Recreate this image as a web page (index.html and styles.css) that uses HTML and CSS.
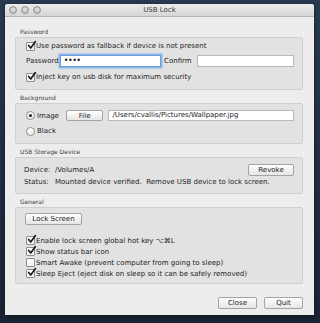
FILE: index.html
```html
<!DOCTYPE html>
<html>
<head>
<meta charset="utf-8">
<link rel="stylesheet" href="styles.css">
</head>
<body>
<div class="window">
  <div class="titlebar">
    <div class="lights"><span class="light"></span><span class="light"></span><span class="light"></span></div>
    <div class="title">USB Lock</div>
  </div>
  <div class="content">
    <div class="section-label">Password</div>
    <div class="box box-password">
      <div class="row chk-row"><span class="cb on"><svg viewBox="0 0 8 8"><path d="M1.5 4 L3.3 6.2 L7.5 0.5" /></svg></span><span>Use password as fallback if device is not present</span></div>
      <div class="row input-row">
        <span class="lbl">Password</span>
        <span class="field pw focus">••••</span>
        <span class="lbl confirm">Confirm</span>
        <span class="field cf"></span>
      </div>
      <div class="row chk-row r3"><span class="cb on"><svg viewBox="0 0 8 8"><path d="M1.5 4 L3.3 6.2 L7.5 0.5" /></svg></span><span>Inject key on usb disk for maximum security</span></div>
    </div>

    <div class="section-label">Background</div>
    <div class="box box-bg">
      <div class="row bg-row">
        <span class="radio on"></span><span class="rlabel">Image</span>
        <span class="btn file">File</span>
        <span class="field path">/Users/cvallis/Pictures/Wallpaper.jpg</span>
      </div>
      <div class="row chk-row r2"><span class="radio"></span><span>Black</span></div>
    </div>

    <div class="section-label">USB Storage Device</div>
    <div class="box box-usb">
      <div class="row usb-row">
        <span class="klbl">Device:</span><span class="val">/Volumes/A</span>
        <span class="btn revoke">Revoke</span>
      </div>
      <div class="row usb-row2">
        <span class="klbl">Status:</span><span class="val">Mounted device verified.&nbsp;&nbsp;Remove USB device to lock screen.</span>
      </div>
    </div>

    <div class="section-label">General</div>
    <div class="box box-gen">
      <div class="row"><span class="btn lock">Lock Screen</span></div>
      <div class="checks">
        <div class="row crow"><span class="cb on"><svg viewBox="0 0 8 8"><path d="M1.5 4 L3.3 6.2 L7.5 0.5" /></svg></span><span>Enable lock screen global hot key ⌥⌘L</span></div>
        <div class="row crow"><span class="cb on"><svg viewBox="0 0 8 8"><path d="M1.5 4 L3.3 6.2 L7.5 0.5" /></svg></span><span>Show status bar icon</span></div>
        <div class="row crow"><span class="cb"></span><span>Smart Awake (prevent computer from going to sleep)</span></div>
        <div class="row crow"><span class="cb on"><svg viewBox="0 0 8 8"><path d="M1.5 4 L3.3 6.2 L7.5 0.5" /></svg></span><span>Sleep Eject (eject disk on sleep so it can be safely removed)</span></div>
      </div>
    </div>

    <div class="buttons">
      <span class="btn bottom">Close</span>
      <span class="btn bottom">Quit</span>
    </div>
  </div>
</div>
</body>
</html>
```
FILE: styles.css
```css
html, body {
  margin: 0;
  padding: 0;
}
body {
  width: 320px;
  height: 323px;
  background: linear-gradient(180deg, #2a3a52 0%, #1f2c40 60%, #1a2434 100%);
  padding: 4px 0 0 5px;
  box-sizing: border-box;
  font-family: "DejaVu Sans", "Lucida Grande", sans-serif;
  font-size: 7px;
  color: #222;
}
.window {
  width: 309px;
  height: 311px;
  background: #ededed;
  border-radius: 3px 3px 0 0;
  box-shadow: 0 1px 4px rgba(0,0,0,0.5);
  overflow: hidden;
}
.titlebar {
  height: 12px;
  background: linear-gradient(180deg, #ececec 0%, #d6d6d6 100%);
  border-bottom: 1px solid #b5b5b5;
  position: relative;
  display: flex;
  align-items: center;
  justify-content: center;
}
.lights {
  position: absolute;
  left: 4px;
  top: 2px;
  display: flex;
  gap: 4px;
}
.light {
  width: 6px;
  height: 6px;
  border-radius: 50%;
  background: radial-gradient(circle at 50% 40%, #e4e4e4 0%, #c4c4c4 70%);
  border: 0.8px solid #8f8f8f;
}
.title {
  font-size: 7px;
  color: #3a3a3a;
  line-height: 12px;
}
.content {
  padding: 11px 11px 0 10px;
}
.section-label {
  font-size: 6px;
  line-height: 8px;
  height: 8px;
  color: #3c3c3c;
  padding-left: 5px;
  margin-bottom: 1px;
}
.box {
  background: #e2e2e2;
  border: 1px solid #cfcfcf;
  border-radius: 2px;
  margin-bottom: 4px;
  padding-left: 10px;
  padding-right: 8px;
}
.row {
  display: flex;
  align-items: center;
  white-space: nowrap;
}
.chk-row { height: 10px; }
.cb {
  width: 7px;
  height: 7px;
  background: linear-gradient(180deg, #fff 0%, #f0f0f0 100%);
  border: 1px solid #8e8e8e;
  border-radius: 1px;
  margin-right: 1px;
  position: relative;
  flex: none;
}
.cb svg {
  position: absolute;
  left: 0;
  top: -2px;
  width: 9px;
  height: 9px;
  overflow: visible;
}
.cb svg path {
  fill: none;
  stroke: #1a1a1a;
  stroke-width: 1.5;
  stroke-linecap: round;
  stroke-linejoin: round;
}
.radio {
  width: 7px;
  height: 7px;
  border-radius: 50%;
  background: linear-gradient(180deg, #fff 0%, #ececec 100%);
  border: 1px solid #8e8e8e;
  margin-right: 2px;
  position: relative;
  flex: none;
}
.radio.on::after {
  content: "";
  position: absolute;
  left: 2px;
  top: 2px;
  width: 3px;
  height: 3px;
  border-radius: 50%;
  background: #222;
}
.box-password { padding-top: 3px; padding-bottom: 7px; height: 41px; }
.input-row { height: 12px; margin-top: 4px; }
.r3 { margin-top: 5px; }
.lbl { margin-right: 1px; }
.confirm { margin-left: 3px; margin-right: 5px; }
.field {
  height: 12px;
  box-sizing: border-box;
  background: #fff;
  border: 1px solid #b8b8b8;
  line-height: 10px;
  padding-left: 3px;
}
.field.pw {
  width: 102px;
  border-color: #6d9fd9;
  box-shadow: 0 0 0 1.5px #8ab8ec;
  font-size: 8px;
  letter-spacing: -0.5px;
}
.field.cf { width: 98px; }
.box-bg { padding-top: 6px; padding-bottom: 6px; height: 27px; }
.r2 { margin-top: 5px; }
.rlabel { width: 29px; }
.btn {
  display: inline-flex;
  align-items: center;
  justify-content: center;
  height: 11px;
  box-sizing: border-box;
  background: linear-gradient(180deg, #ffffff 0%, #f2f2f2 50%, #e6e6e6 100%);
  border: 1px solid #a3a3a3;
  border-radius: 2px;
  font-size: 7px;
  color: #1e1e1e;
}
.btn.file { width: 38px; margin-right: 5px; }
.field.path { width: 187px; height: 11px; line-height: 9px; }
.box-usb { padding-top: 6px; padding-bottom: 5px; height: 24px; padding-left: 8px; }
.usb-row { height: 12px; }
.usb-row2 { height: 12px; }
.klbl { width: 31px; flex: none; }
.val { flex: none; }
.btn.revoke { width: 46px; margin-left: auto; height: 12px; }
.box-gen { padding-top: 5px; padding-bottom: 3px; height: 67px; }
.btn.lock { width: 57px; height: 12px; margin-left: -1px; }
.checks { margin-top: 10px; }
.crow { height: 11px; }
.buttons {
  display: flex;
  justify-content: flex-end;
  gap: 7px;
  margin-top: 13px;
}
.btn.bottom { width: 39px; height: 12px; }
```
